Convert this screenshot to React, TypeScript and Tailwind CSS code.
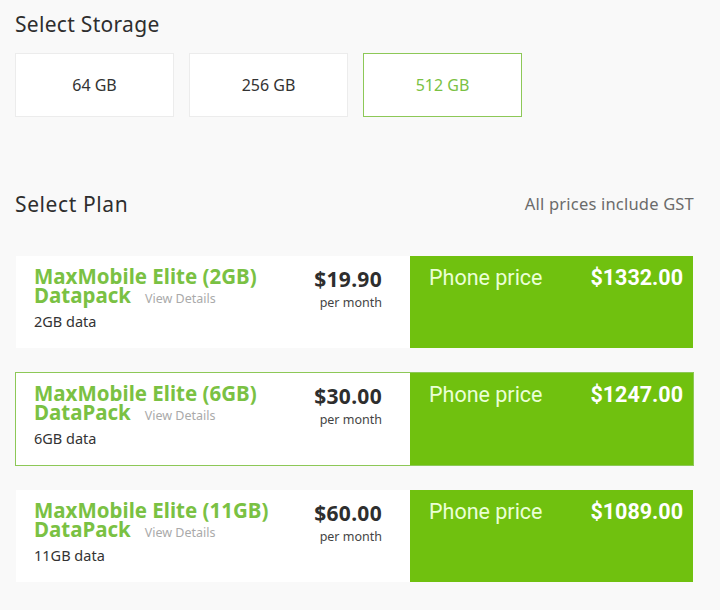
import React from "react";

const plans = [
  { name: "MaxMobile Elite (2GB)", pack: "Datapack", data: "2GB data", price: "$19.90", phone: "$1332.00", selected: false },
  { name: "MaxMobile Elite (6GB)", pack: "DataPack", data: "6GB data", price: "$30.00", phone: "$1247.00", selected: true },
  { name: "MaxMobile Elite (11GB)", pack: "DataPack", data: "11GB data", price: "$60.00", phone: "$1089.00", selected: false },
];

const storages = [
  { label: "64 GB", selected: false },
  { label: "256 GB", selected: false },
  { label: "512 GB", selected: true },
];

export default function App() {
  return (
    <div className="min-h-[610px] w-[720px] bg-[#f9f9f9] pl-[15px] pt-[10px] text-[#333]" style={{ fontFamily: '"Noto Sans", "DejaVu Sans", sans-serif' }}>
      <h2 className="text-[21px] leading-[28px] tracking-[0.3px] text-[#2e2e2e]">Select Storage</h2>
      <div className="mt-[15px] flex gap-[15px]">
        {storages.map((s) => (
          <div
            key={s.label}
            className={`flex h-[64px] w-[159px] items-center justify-center bg-white text-[16px] ${
              s.selected ? "border border-[#8dc857] text-[#7ac143]" : "border border-[#ececec] text-[#333]"
            }`}
          >
            {s.label}
          </div>
        ))}
      </div>
      <div className="mt-[73px] flex w-[679px] items-end justify-between">
        <h2 className="text-[21px] leading-[28px] tracking-[0.6px] text-[#2e2e2e]">Select Plan</h2>
        <span className="mb-[1px] text-[16.5px] tracking-[0.2px] text-[#6b6b6b]">All prices include GST</span>
      </div>
      <div className="mt-[37px] flex w-[679px] flex-col gap-[23px]">
        {plans.map((p) => (
          <div
            key={p.name}
            className={`flex h-[94px] ${p.selected ? "border border-[#8dc857]" : "border border-transparent"}`}
          >
            <div className="flex flex-1 justify-between bg-white pl-[18px] pr-[28px] pt-[11px]">
              <div>
                <div className="whitespace-pre-line text-[20.5px] font-bold leading-[19px] text-[#7ac143]">
                  {p.name + "\n" + p.pack}
                  <span className="ml-[14px] text-[12.5px] font-normal text-[#aaa]">View Details</span>
                </div>
                <div className="mt-[3px] text-[14.5px] leading-[20px] text-[#333]">{p.data}</div>
              </div>
              <div className="flex flex-col items-end">
                <span className="text-[21px] font-bold leading-[24px] tracking-[0.3px] text-[#2e2e2e]">{p.price}</span>
                <span className="mt-[3px] text-[12.5px] text-[#444]">per month</span>
              </div>
            </div>
            <div className="flex w-[283px] justify-between bg-[#70c10f] pl-[19px] pr-[10px] pt-[9px]" style={{ fontFamily: 'Roboto, "Noto Sans", sans-serif' }}>
              <span className="text-[21.5px] leading-[26px] text-[#eaffd6]">Phone price</span>
              <span className="text-[21.5px] font-bold leading-[26px] text-white">{p.phone}</span>
            </div>
          </div>
        ))}
      </div>
    </div>
  );
}
